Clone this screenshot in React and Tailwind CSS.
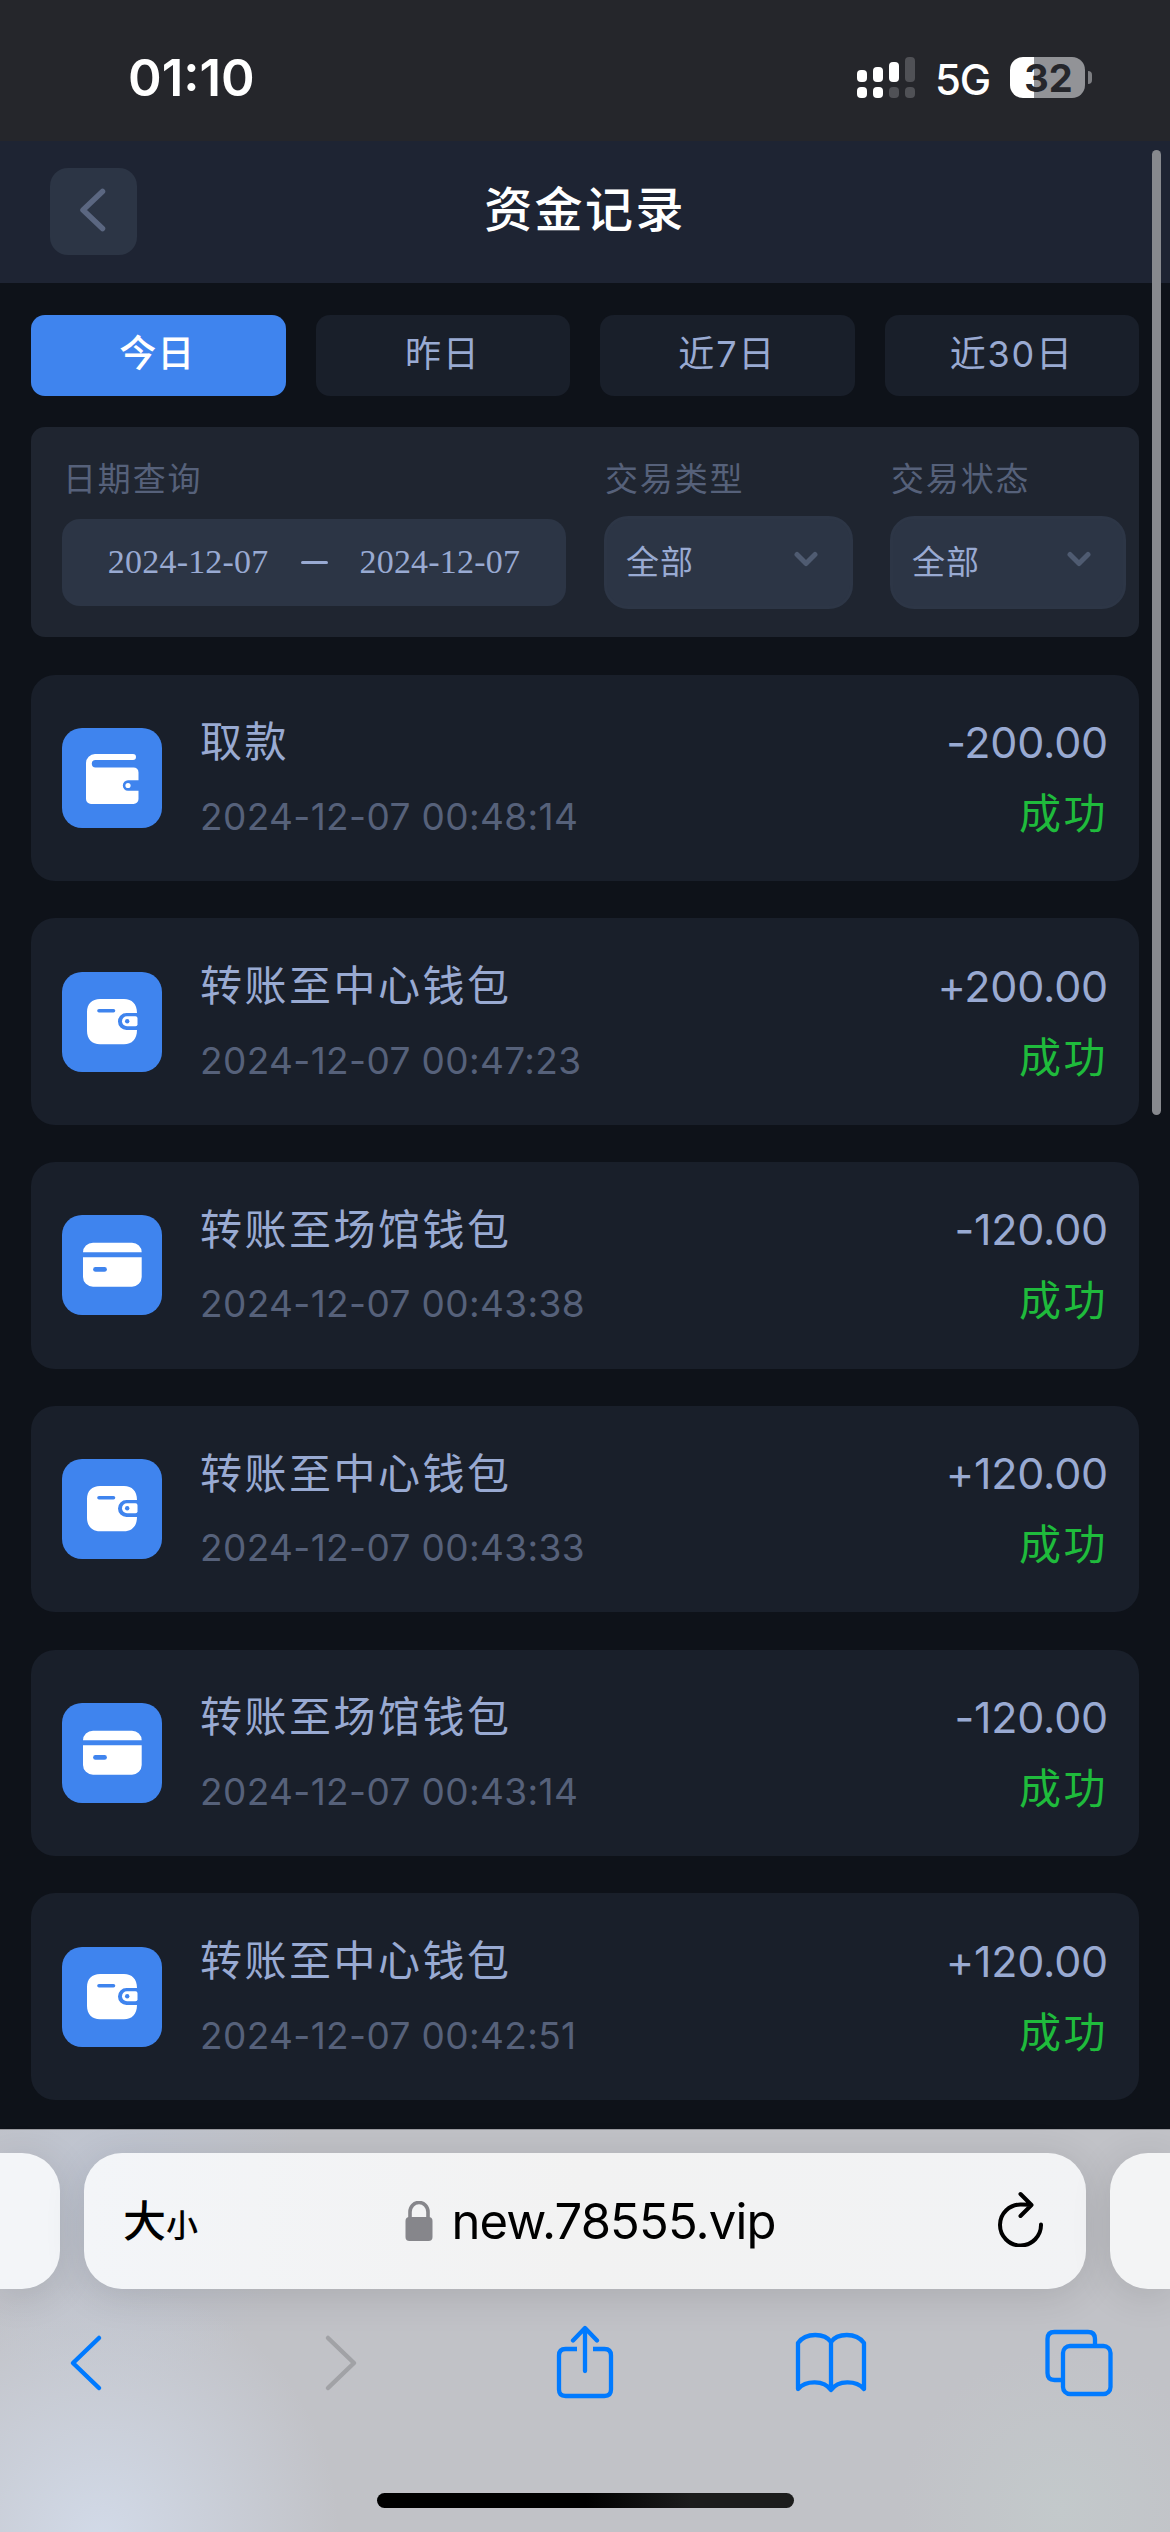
import React from "react";

const SANS = "font-[Inter,'Noto_Sans_CJK_SC',sans-serif]";

function SignalBars() {
  const cols = [
    [70, 12, true, true],
    [67, 15, true, true],
    [62, 20, true, false],
    [57, 25, false, false],
  ];
  return (
    <svg width="58" height="41" viewBox="0 57 58 41" className="shrink-0">
      {cols.map(([y, h, top, bottom], i) => (
        <g key={i}>
          <rect x={i * 16} y={y} width="10" height={h} rx="4" fill={top ? "#fff" : "#505156"} />
          <rect x={i * 16} y="87" width="10" height="11" rx="4" fill={bottom ? "#fff" : "#505156"} />
        </g>
      ))}
    </svg>
  );
}

function StatusBar() {
  return (
    <div className="flex h-[141px] items-center bg-[#25262b] pt-[14px] text-white">
      <span className="ml-[128px] w-[132px] text-[51px] font-semibold leading-none whitespace-nowrap">01:10</span>
      <div className="ml-auto mr-[78px] flex items-center">
        <SignalBars />
        <span className="ml-[20px] mt-[4px] w-[56px] text-[42px] font-medium leading-none tracking-[-0.03em]">5G</span>
        <div className="ml-[19px] flex h-[41px] w-[75px] items-center justify-center rounded-[13px] bg-[linear-gradient(90deg,#fff_24px,#929397_24px)] pl-[2px] text-[38px] font-bold leading-none text-[#25262b]">
          32
        </div>
        <div className="ml-[3px] h-[13px] w-[4px] rounded-r-full bg-[#7d7e82]" />
      </div>
    </div>
  );
}

function Header() {
  return (
    <header className="grid h-[142px] grid-cols-[1fr_auto_1fr] items-center bg-[#1e2433] px-[50px] pb-[2px]">
      <button className="flex size-[87px] items-center justify-center rounded-[18px] bg-[#2c3545] pr-[2px] pb-[2px]">
        <svg width="27" height="44" viewBox="0 0 27 44" fill="none" stroke="#5b6781" strokeWidth="5.5" strokeLinecap="round" strokeLinejoin="round">
          <path d="M23.5 3.5 4 22l19.5 18.5" />
        </svg>
      </button>
      <h1 className="pb-[2px] text-[48px] font-medium leading-none tracking-[0.05em] text-white">资金记录</h1>
    </header>
  );
}

function Tabs() {
  const tabs = ["今日", "昨日", "近7日", "近30日"];
  return (
    <nav className="grid grid-cols-4 gap-[30px]">
      {tabs.map((t, i) => (
        <button
          key={t}
          className={
            i === 0
              ? "h-[81px] rounded-[14px] bg-[#3f84ee] pr-[2px] pb-[3px] text-[37px] font-medium tracking-[0.03em] text-white"
              : "h-[81px] rounded-[14px] bg-[#191f2a] pb-[3px] text-[36px] tracking-[0.05em] text-[#99aad2]"
          }
        >
          {t}
        </button>
      ))}
    </nav>
  );
}

function Field({ label, children, className }) {
  return (
    <div className={className}>
      <div className="flex h-[89px] items-center pt-[15px] pl-px text-[33px] leading-none tracking-[0.055em] text-[#56617a]">{label}</div>
      {children}
    </div>
  );
}

function Select() {
  return (
    <div className="flex h-[93px] w-full items-center justify-between rounded-[24px] border-[3px] border-[#2d3646] bg-[#2c3545] pl-[19px] pr-[31px] text-[33px] tracking-[0.03em] text-[#99aad2]">
      全部
      <svg width="26" height="16" viewBox="0 0 26 16" fill="none" stroke="#4f5b71" strokeWidth="5" strokeLinecap="round" strokeLinejoin="round" className="-mt-[8px]">
        <path d="M4 3.5 13 12.5 22 3.5" />
      </svg>
    </div>
  );
}

function Filters() {
  return (
    <section className="mt-[31px] flex h-[210px] rounded-[14px] bg-[#1f2530] pl-[31px] pr-[13px]">
      <Field label="日期查询" className="w-[504px]">
        <div className="mt-[3px] flex h-[87px] items-center justify-center rounded-[18px] bg-[#2c3545] pb-px font-['Liberation_Serif',serif] text-[34px] leading-none tracking-[0.2px] text-[#99aad2]">
          <span>2024-12-07</span>
          <span className="mx-[32px] h-[3px] w-[27px] rounded-full bg-[#99aad2]" />
          <span>2024-12-07</span>
        </div>
      </Field>
      <Field label="交易类型" className="ml-[38px] w-[249px]">
        <Select />
      </Field>
      <Field label="交易状态" className="ml-[37px] flex-1">
        <Select />
      </Field>
    </section>
  );
}

function WithdrawIcon() {
  return (
    <svg width="100" height="100" viewBox="0 0 100 100" fill="none">
      <path fill="#fff" d="M33 26H71a3 3 0 0 1 0 6H33.500a3.700 3.700 0 0 0 0 7.400H71.500a5 5 0 0 1 5 5V52.300H66a5.200 5.200 0 0 0 0 10.400H76.500V71a5 5 0 0 1-5 5H29a5 5 0 0 1-5-5V35a9 9 0 0 1 9-9z" />
      <circle cx="66" cy="57.500" r="2.600" fill="#fff" />
    </svg>
  );
}

function CenterIcon() {
  return (
    <svg width="100" height="100" viewBox="0 0 100 100" fill="none">
      <path fill="#fff" d="M38 27H62C70 27 75 32 75 41H64.500a8.500 8.500 0 0 0 0 17H75C75 67 70 72.300 62 72.300H38C30 72.300 25 67 25 59V40C25 32 30 27 38 27z" />
      <path fill="#fff" d="M65 44.300H73.500a2 2 0 0 1 2 2V52.300a2 2 0 0 1-2 2H65a5 5 0 0 1 0-10z" />
      <circle cx="65.200" cy="49.300" r="2.200" fill="#3f84ee" />
      <path d="M37 38.700H51.500" stroke="#3f84ee" strokeWidth="3.600" strokeLinecap="round" />
    </svg>
  );
}

function VenueIcon() {
  return (
    <svg width="100" height="100" viewBox="0 0 100 100" fill="none">
      <path fill="#fff" d="M31 27.700H70a10 9.600 0 0 1 9.700 9.600H21A10 9.600 0 0 1 31 27.700zM21 42.300H79.700V62a9.700 9.700 0 0 1-9.700 9.700H31a10 9.700 0 0 1-10-9.700z" />
      <path d="M33.500 54.400H42.500" stroke="#3f84ee" strokeWidth="4.800" strokeLinecap="round" />
    </svg>
  );
}

const ICONS = { withdraw: WithdrawIcon, center: CenterIcon, venue: VenueIcon };

const RECORDS = [
  ["withdraw", "取款", "2024-12-07 00:48:14", "-200.00"],
  ["center", "转账至中心钱包", "2024-12-07 00:47:23", "+200.00"],
  ["venue", "转账至场馆钱包", "2024-12-07 00:43:38", "-120.00"],
  ["center", "转账至中心钱包", "2024-12-07 00:43:33", "+120.00"],
  ["venue", "转账至场馆钱包", "2024-12-07 00:43:14", "-120.00"],
  ["center", "转账至中心钱包", "2024-12-07 00:42:51", "+120.00"],
];

function RecordCard({ kind, title, time, amount }) {
  const Icon = ICONS[kind];
  return (
    <li className="flex h-[206.500px] items-center rounded-[24px] bg-[#191f2a] px-[31px]">
      <div className="size-[100px] shrink-0 overflow-hidden rounded-[20px] bg-[#3f84ee]">
        <Icon />
      </div>
      <div className="ml-[38px] flex h-[127px] flex-col justify-between">
        <span className="flex h-[56px] items-center text-[42px] leading-none tracking-[0.06em] text-[#99aad2]">{title}</span>
        <span className="flex h-[50px] items-center text-[37px] leading-none tracking-[0.01em] text-[#56617a]">{time}</span>
      </div>
      <div className="ml-auto flex h-[127px] flex-col items-end justify-between">
        <span className="flex h-[56px] items-center text-[43px] leading-none tracking-[-0.005em] text-[#99aad2]">{amount}</span>
        <span className="flex h-[55px] items-center text-[42px] leading-none tracking-[0.06em] text-[#1fbb3c]">成功</span>
      </div>
    </li>
  );
}

function ToolbarSlot({ className = "", children }) {
  return <div className={`flex w-[72px] items-center justify-center ${className}`}>{children}</div>;
}

function BrowserChrome() {
  return (
    <footer className="flex h-[403px] flex-col border-t border-[#9a9ba0] bg-[radial-gradient(ellipse_240px_260px_at_100px_410px,#d2dae8,transparent),radial-gradient(ellipse_160px_160px_at_1060px_380px,#c3c9cb,transparent),radial-gradient(ellipse_200px_200px_at_110px_60px,#bfc5d2,transparent)] bg-[#c1c2c7]">
      <div className="mt-[23px] flex h-[136px] shrink-0 gap-[24px] overflow-visible">
        <div className="w-[60px] shrink-0 rounded-r-[38px] bg-[#f3f5f8] shadow-[0_6px_40px_rgba(0,0,0,0.12)]" />
        <div className="flex flex-1 items-center rounded-[38px] bg-[linear-gradient(90deg,#f3f5f8,#f2f2f2_50%,#f2f3f5)] pl-[39px] pr-[42px] text-black shadow-[0_6px_40px_rgba(0,0,0,0.12)]">
          <div className="flex items-baseline font-medium leading-none">
            <span className="text-[43px]">大</span>
            <span className="text-[32px]">小</span>
          </div>
          <div className="mx-auto flex items-center pr-[16px]">
            <svg width="28" height="40" viewBox="0 0 28 40" fill="none">
              <rect x="0.500" y="16" width="27" height="24" rx="4" fill="#86868b" />
              <path d="M5 18V11a9 9.500 0 0 1 18 0V18" stroke="#86868b" strokeWidth="3.600" />
            </svg>
            <span className="ml-[19px] text-[49px] leading-none tracking-[-0.018em]">new.78555.vip</span>
          </div>
          <svg width="46" height="56" viewBox="0 0 46 56" fill="none" stroke="#000" strokeWidth="4" strokeLinecap="round" strokeLinejoin="round" className="-mt-[5px]">
            <path d="M43 33.500A20.500 20.500 0 1 1 23 13.500L33 13.800M22.500 3 33.500 14 22.500 25" />
          </svg>
        </div>
        <div className="w-[60px] shrink-0 rounded-l-[38px] bg-[#f3f4f5] shadow-[0_6px_40px_rgba(0,0,0,0.12)]" />
      </div>
      <div className="mt-[32px] flex h-[84px] items-center justify-between pl-[50px] pr-[55px] text-[#007aff]">
        <ToolbarSlot>
          <svg width="36" height="58" viewBox="0 0 36 58" fill="none" stroke="currentColor" strokeWidth="4.500" strokeLinecap="round" strokeLinejoin="round">
            <path d="M31 4 5 29 31 54" />
          </svg>
        </ToolbarSlot>
        <ToolbarSlot className="pl-[14px]">
          <svg width="36" height="58" viewBox="0 0 36 58" fill="none" stroke="#a1a2a6" strokeWidth="4.500" strokeLinecap="round" strokeLinejoin="round">
            <path d="M5 4 31 29 5 54" />
          </svg>
        </ToolbarSlot>
        <ToolbarSlot className="pl-[5px] pb-[2px]">
          <svg width="58" height="74" viewBox="0 0 58 74" fill="none" stroke="currentColor" strokeWidth="4.300" strokeLinejoin="round">
            <path d="M21 24H9.500Q3 24 3 30.500V64.500Q3 71 9.500 71H48.500Q55 71 55 64.500V30.500Q55 24 48.500 24H37" />
            <path d="M29 46V4M17 15.500 29 3 41 15.500" strokeLinecap="round" />
          </svg>
        </ToolbarSlot>
        <ToolbarSlot>
          <svg width="72" height="62" viewBox="0 0 72 62" fill="none" stroke="currentColor" strokeWidth="4.300" strokeLinejoin="round">
            <path d="M36 10C30 1 11 0 3 11V57C11 48 29 48 36 58C43 48 61 48 69 57V11C61 0 42 1 36 10ZM36 10V58" />
          </svg>
        </ToolbarSlot>
        <ToolbarSlot>
          <svg width="68" height="68" viewBox="0 0 68 68" fill="none" stroke="currentColor" strokeWidth="4.300">
            <path d="M50 16V10Q50 3 43 3H9.500Q2.500 3 2.500 10V44Q2.500 51 9.500 51H17" />
            <rect x="18" y="17" width="47.500" height="48" rx="7" />
          </svg>
        </ToolbarSlot>
      </div>
      <div className="mx-auto mt-[88px] h-[15px] w-[417px] shrink-0 rounded-full bg-[linear-gradient(90deg,#000_50%,#1c1c1c_75%)]" />
    </footer>
  );
}

export default function App() {
  return (
    <div className={`relative flex h-[2532px] w-[1170px] flex-col overflow-hidden bg-[#0e1219] ${SANS}`}>
      <StatusBar />
      <Header />
      <main className="flex h-[1846px] shrink-0 flex-col px-[31px] pt-[32px]">
        <Tabs />
        <Filters />
        <ul className="mt-[37.500px] flex flex-col gap-[37.300px]">
          {RECORDS.map(([kind, title, time, amount]) => (
            <RecordCard key={time} kind={kind} title={title} time={time} amount={amount} />
          ))}
        </ul>
      </main>
      <BrowserChrome />
      <div className="absolute top-[150px] right-[9px] h-[965px] w-[9px] rounded-full bg-[#87898e]" />
    </div>
  );
}
